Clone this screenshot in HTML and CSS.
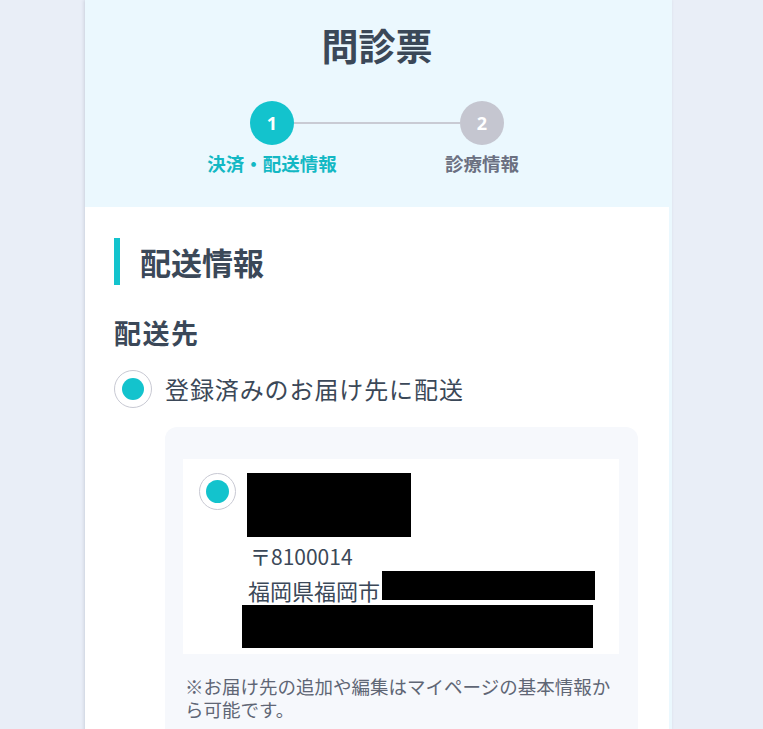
FILE: index.html
```html
<!DOCTYPE html>
<html lang="ja">
<head>
<meta charset="utf-8">
<title>問診票</title>
<link rel="stylesheet" href="styles.css">
</head>
<body>
<div class="page">
  <div class="sheet">
    <header class="head">
      <h1 class="title">問診票</h1>
      <div class="stepper">
        <div class="step-line"></div>
        <div class="step active">
          <div class="step-num">1</div>
          <div class="step-label">決済・配送情報</div>
        </div>
        <div class="step">
          <div class="step-num">2</div>
          <div class="step-label">診療情報</div>
        </div>
      </div>
    </header>
    <main class="body">
      <h2 class="sec-title">配送情報</h2>
      <h3 class="sub-title">配送先</h3>
      <label class="option">
        <span class="radio checked"><span class="dot"></span></span>
        <span class="option-text">登録済みのお届け先に配送</span>
      </label>
      <div class="saved-box">
        <div class="addr-card">
          <span class="radio checked"><span class="dot"></span></span>
          <div class="addr">
            <div class="redact name"></div>
            <div class="addr-line zip">〒8100014</div>
            <div class="addr-line city"><span class="city-text">福岡県福岡市</span><span class="redact inline"></span></div>
            <div class="redact line3"></div>
          </div>
        </div>
        <p class="note">※お届け先の追加や編集はマイページの基本情報から可能です。</p>
      </div>
    </main>
  </div>
</div>
</body>
</html>
```
FILE: styles.css
```css
* { box-sizing: border-box; }
html, body {
  margin: 0;
  padding: 0;
  background: #e9eef7;
  font-family: "Noto Sans CJK JP", "Noto Sans", sans-serif;
  color: #3b4858;
}
.page {
  height: 729px;
  overflow: hidden;
}
.sheet {
  margin-left: 85px;
  width: 587px;
  padding-right: 3px;
  background: #ebf8fe;
  min-height: 729px;
  box-shadow: -1px 0 3px rgba(120, 130, 150, 0.25);
  display: flex;
  flex-direction: column;
}
.head {
  height: 207px;
  display: flex;
  flex-direction: column;
  align-items: center;
  padding-top: 22px;
}
.title {
  margin: 0;
  font-size: 37px;
  line-height: 46px;
  font-weight: 700;
  color: #3b4858;
}
.stepper {
  position: relative;
  margin-top: 33px;
  display: flex;
  gap: 60px;
}
.step-line {
  position: absolute;
  left: 97px;
  right: 97px;
  top: 21px;
  height: 2px;
  background: #c9cbd4;
}
.step {
  position: relative;
  width: 150px;
  display: flex;
  flex-direction: column;
  align-items: center;
}
.step-num {
  width: 44px;
  height: 44px;
  border-radius: 50%;
  background: #c5c6d0;
  color: #fff;
  font-family: "Open Sans", "Noto Sans", sans-serif;
  font-weight: 700;
  font-size: 18px;
  display: flex;
  align-items: center;
  justify-content: center;
}
.step-label {
  margin-top: 4px;
  font-size: 18.5px;
  line-height: 28px;
  font-weight: 700;
  color: #6b7081;
  white-space: nowrap;
}
.step.active .step-num { background: #13c3cd; }
.step.active .step-label { color: #13b8c4; }

.body {
  flex: 1;
  background: #fff;
  padding: 31px 31px 0 29px;
}
.sec-title {
  margin: 0;
  border-left: 6px solid #13c3cd;
  padding-left: 20px;
  height: 47px;
  display: flex;
  align-items: center;
  font-size: 31px;
  font-weight: 700;
  color: #3b4858;
}
.sub-title {
  margin: 29px 0 0;
  font-size: 27px;
  line-height: 38px;
  letter-spacing: 1.5px;
  font-weight: 700;
  color: #3b4858;
}
.option {
  margin-top: 18px;
  display: flex;
  align-items: center;
  gap: 13px;
}
.radio {
  flex: none;
  width: 38px;
  height: 38px;
  border-radius: 50%;
  border: 1px solid #c8c9d3;
  background: #fff;
  display: flex;
  align-items: center;
  justify-content: center;
}
.radio .dot {
  width: 22px;
  height: 22px;
  border-radius: 50%;
  background: #13c3cd;
}
.option-text {
  font-size: 24px;
  line-height: 36px;
  letter-spacing: 0.9px;
  color: #3b4858;
}
.saved-box {
  margin: 19px 0 0 51px;
  background: #f6f8fc;
  border-radius: 12px 12px 0 0;
  padding: 32px 19px 20px 18px;
}
.addr-card {
  background: #fff;
  display: flex;
  align-items: flex-start;
  gap: 10px;
  padding: 14px 10px 6px 16px;
}
.addr-card .radio {
  width: 37px;
  height: 37px;
}
.addr-card .radio .dot {
  width: 23px;
  height: 23px;
}
.addr {
  flex: 1;
  display: flex;
  flex-direction: column;
  align-items: flex-start;
}
.redact { background: #000; }
.redact.name {
  width: 164px;
  height: 64px;
  margin-left: 1px;
}
.addr-line {
  color: #3b4858;
  display: flex;
  align-items: center;
  white-space: nowrap;
}
.addr-line.zip {
  font-size: 21px;
  line-height: 38px;
  margin-left: 4px;
}
.addr-line.city {
  font-size: 22px;
  line-height: 30px;
  margin-left: 2px;
}
.city-text { flex: none; }
.redact.inline {
  flex: none;
  align-self: flex-start;
  width: 213px;
  height: 29px;
  margin-top: -4px;
  margin-left: 2px;
}
.redact.line3 {
  width: 351px;
  height: 43px;
  margin-left: -4px;
}
.note {
  margin: 21px 0 0 2px;
  font-size: 18.5px;
  line-height: 23px;
  color: #5f6675;
}
```
